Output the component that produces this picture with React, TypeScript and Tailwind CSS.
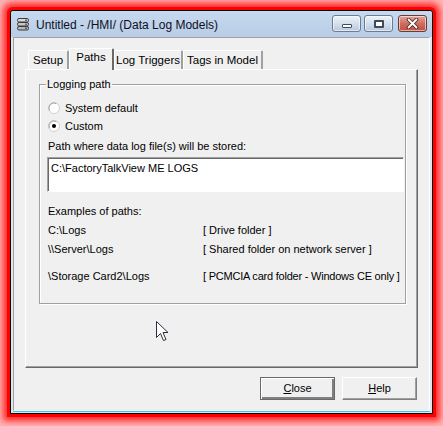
import React from "react";

// Classic Windows dialog: "Data Log Models" – Paths tab

function DbIcon() {
  return (
    <svg width="14" height="14" viewBox="0 0 14 14" className="shrink-0">
      <rect x="1.5" y="1.5" width="11" height="3.5" rx="1.5" fill="#d8d8d8" stroke="#3a3a3a" />
      <rect x="1.5" y="5.5" width="11" height="3.5" rx="1.5" fill="#c8c8c8" stroke="#3a3a3a" />
      <rect x="1.5" y="9.5" width="11" height="3.5" rx="1.5" fill="#b8b8b8" stroke="#3a3a3a" />
      <line x1="9" y1="3.2" x2="11" y2="3.2" stroke="#3a3a3a" />
      <line x1="9" y1="7.2" x2="11" y2="7.2" stroke="#3a3a3a" />
      <line x1="9" y1="11.2" x2="11" y2="11.2" stroke="#3a3a3a" />
    </svg>
  );
}

function CaptionButton({ kind }: { kind: "min" | "max" | "close" }) {
  const base =
    "w-[29px] h-[17px] rounded-[3px] border flex items-center justify-center shadow-[inset_0_0_0_1px_rgba(255,255,255,0.55)]";
  if (kind === "close") {
    return (
      <div className={base + " border-[#6e3a35] bg-gradient-to-b from-[#e3a59c] via-[#cf6e60] to-[#c0503f]"}>
        <svg width="13" height="11" viewBox="0 0 13 11">
          <path d="M2.5 1.5 L10.5 9.5 M10.5 1.5 L2.5 9.5" stroke="#4b2a28" strokeWidth="3.6" strokeLinecap="round" />
          <path d="M2.5 1.5 L10.5 9.5 M10.5 1.5 L2.5 9.5" stroke="#ffffff" strokeWidth="1.8" strokeLinecap="round" />
        </svg>
      </div>
    );
  }
  return (
    <div className={base + " border-[#6b7c93] bg-gradient-to-b from-[#eef3f9] via-[#d3dfed] to-[#b9cade]"}>
      {kind === "min" ? (
        <div className="mt-[5px] w-[10px] h-[4px] rounded-[1px] border border-[#3f4a5a] bg-white" />
      ) : (
        <div className="w-[10px] h-[8px] rounded-[1px] border-[2px] border-[#3f4a5a] bg-white" />
      )}
    </div>
  );
}

function Tab({ label, selected, w }: { label: string; selected?: boolean; w: number }) {
  if (selected) {
    return (
      <div
        style={{ width: w }}
        className="relative z-10 -mb-px h-[22px] bg-[#f0f0f0] border-t border-l border-white border-r-2 border-r-[#696969] rounded-t-[2px] flex justify-center pt-[2px] leading-[13px] whitespace-nowrap text-[11.5px]"
      >
        {label}
      </div>
    );
  }
  return (
    <div
      style={{ width: w }}
      className="h-[19px] bg-[#f0f0f0] border-t border-l border-white border-r-2 border-r-[#a0a0a0] rounded-t-[2px] flex items-center justify-center pt-[2px] whitespace-nowrap text-[11.5px]"
    >
      {label}
    </div>
  );
}

function Radio({ checked, label }: { checked?: boolean; label: string }) {
  return (
    <div className="flex items-center h-[14px]">
      <svg width="12" height="12" viewBox="0 0 12 12" className="shrink-0">
        <circle cx="6" cy="6" r="5.5" fill="#ffffff" stroke="#d0d0d0" />
        <path d="M1.6 8.4 A5 5 0 0 1 8.4 1.6" fill="none" stroke="#a0a0a0" strokeWidth="1" />
        {checked && <circle cx="6" cy="6" r="2" fill="#000" />}
      </svg>
      <span className="ml-[5px]">{label}</span>
    </div>
  );
}

function DlgButton({ children, def }: { children: React.ReactNode; def?: boolean }) {
  return (
    <div
      className={
        "w-[75px] h-[23px] flex items-center justify-center bg-[#f0f0f0] " +
        (def
          ? "border border-[#696969] shadow-[inset_1px_1px_0_#ffffff,inset_-2px_-2px_0_#808080]"
          : "border border-t-white border-l-white border-r-[#808080] border-b-[#808080] shadow-[inset_-1px_-1px_0_#a0a0a0]")
      }
    >
      {children}
    </div>
  );
}

export default function App() {
  const examples = [
    { path: "C:\\Logs", note: "[ Drive folder ]" },
    { path: "\\\\Server\\Logs", note: "[ Shared folder on network server ]" },
  ];

  return (
    <div className="relative w-[443px] h-[426px] overflow-hidden bg-[#ffb4b4] p-[10px] font-['Liberation_Sans',Arial,sans-serif] text-[11px] text-black">
      {/* Window */}
      <div className="w-[423px] h-[404px] border border-black rounded-t-[3px] bg-[#dce6f2] shadow-[0_0_0_3px_#ff0000,0_0_6px_7px_#ff2a2a] flex flex-col">
        {/* Title bar */}
        <div className="h-[26px] shrink-0 flex items-start bg-gradient-to-b from-[#c6d9ee] to-[#b8cde6] rounded-t-[3px]">
          <div className="ml-[5px] mt-[6px]">
            <DbIcon />
          </div>
          <span className="ml-[6px] mt-[5px] text-[12px] text-[#0f0f1f] whitespace-nowrap">
            Untitled - /HMI/ (Data Log Models)
          </span>
          <div className="ml-auto mr-[5px] mt-[4px] flex">
            <CaptionButton kind="min" />
            <div className="w-[3px]" />
            <CaptionButton kind="max" />
            <div className="w-[5px]" />
            <CaptionButton kind="close" />
          </div>
        </div>

        {/* Client area */}
        <div className="mx-[2px] mb-[2px] flex-1 flex flex-col bg-[#f0f0f0] border border-t-[#a0a0a0] border-l-[#a0a0a0] border-r-white border-b-white shadow-[0_1px_0_#3ecbe8]">
          {/* Tabs */}
          <div className="mt-[10px] ml-[14px] flex items-end">
            <Tab label="Setup" w={41} />
            <Tab label="Paths" selected w={45} />
            <Tab label="Log Triggers" w={69} />
            <Tab label="Tags in Model" w={80} />
          </div>

          {/* Tab panel */}
          <div className="ml-[11px] w-[393px] h-[299px] border border-t-white border-l-white border-r-[#696969] border-b-[#696969] shadow-[inset_-1px_-1px_0_#a0a0a0] flex flex-col">
            <fieldset className="mt-[8px] ml-[13px] w-[367px] min-w-0 border border-[#a0a0a0] shadow-[inset_1px_1px_0_#ffffff,1px_1px_0_#ffffff] pl-[8px] pr-0 pb-[20px]">
              <legend className="-ml-[2px] px-[1px] leading-[13px]">Logging path</legend>

              <div className="mt-[10px] flex flex-col gap-[4px]">
                <Radio label="System default" />
                <Radio checked label="Custom" />
              </div>

              <div className="mt-[6px] leading-[14px] whitespace-nowrap">Path where data log file(s) will be stored:</div>

              <div className="mt-[4px] -ml-px w-[357px] h-[35px] bg-white border border-t-[#a0a0a0] border-l-[#a0a0a0] border-r-white border-b-white shadow-[inset_1px_1px_0_#696969]">
                <div className="pl-[3px] pt-[3px] leading-[14px]">C:\FactoryTalkView ME LOGS</div>
              </div>

              <div className="mt-[12px] leading-[14px]">Examples of paths:</div>

              <div className="mt-[5px] flex flex-col gap-[5px] leading-[14px]">
                {examples.map((e) => (
                  <div key={e.path} className="flex whitespace-nowrap">
                    <span className="w-[155px]">{e.path}</span>
                    <span>{e.note}</span>
                  </div>
                ))}
              </div>
              <div className="mt-[13px] flex leading-[14px] whitespace-nowrap">
                <span className="w-[155px]">\Storage Card2\Logs</span>
                <span className="tracking-[-0.22px]">[ PCMCIA card folder - Windows CE only ]</span>
              </div>
            </fieldset>
          </div>

          {/* Buttons */}
          <div className="mt-[9px] mr-[12px] flex justify-end gap-[7px]">
            <DlgButton def>
              <span>
                <span className="underline">C</span>lose
              </span>
            </DlgButton>
            <DlgButton>
              <span>
                <span className="underline">H</span>elp
              </span>
            </DlgButton>
          </div>
        </div>
      </div>

      {/* Mouse pointer */}
      <svg width="13" height="21" viewBox="0 0 13 21" className="absolute left-[156px] top-[321px]">
        <path
          d="M0.5 0.5 L0.5 16.5 L4.5 12.5 L7.5 19.5 L10 18.5 L7 11.5 L12 11.5 Z"
          fill="#ffffff"
          stroke="#2a2f3a"
          strokeWidth="1"
          strokeLinejoin="round"
        />
      </svg>
    </div>
  );
}
